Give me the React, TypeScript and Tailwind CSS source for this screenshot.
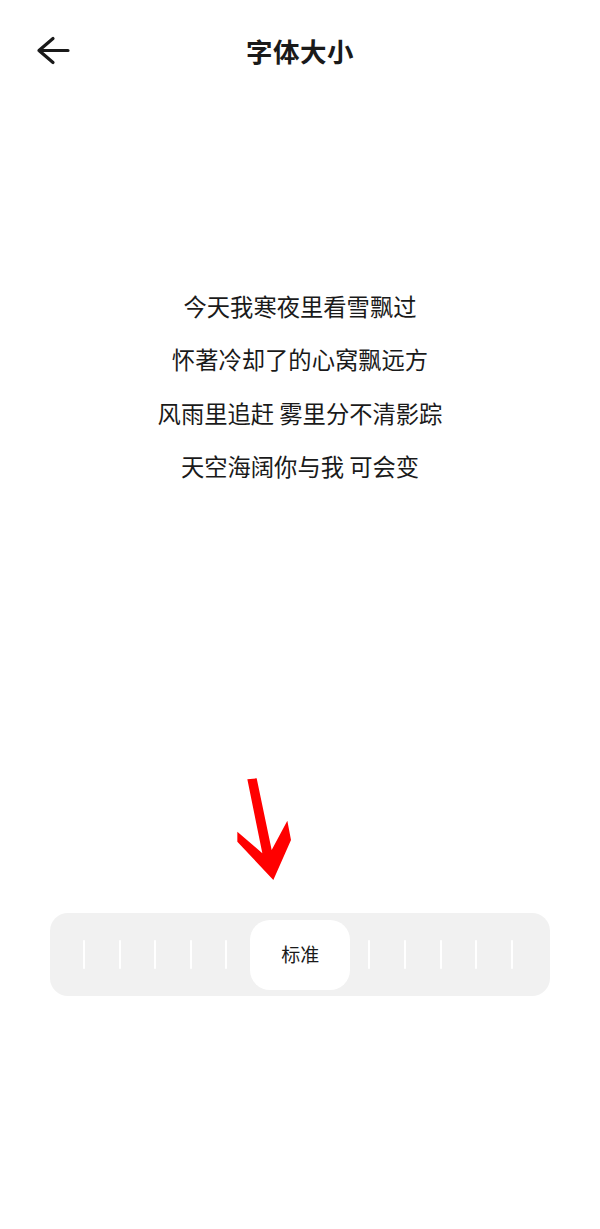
const lyrics = [
  '今天我寒夜里看雪飘过',
  '怀著冷却了的心窝飘远方',
  '风雨里追赶 雾里分不清影踪',
  '天空海阔你与我 可会变',
];

const Ticks = () => (
  <div className="flex items-center gap-[33.6px]">
    {[0, 1, 2, 3, 4].map((i) => (
      <span key={i} className="block h-[29px] w-[2px] rounded-full bg-white" />
    ))}
  </div>
);

export default function App() {
  return (
    <div
      className="relative flex h-[1229px] w-full flex-col bg-white text-[#1a1a1a]"
      style={{ fontFamily: '"Noto Sans CJK SC", "Noto Sans", sans-serif' }}
    >
      {/* Header */}
      <header className="relative flex h-[102px] items-center justify-center">
        <button className="absolute left-[36px] top-[36px] flex h-[30px] w-[34px] items-center justify-center">
          <svg width="34" height="30" viewBox="0 0 34 30" fill="none">
            <path
              d="M17 2.5 L3 14.5 L17 26.5 M3 14.5 H32"
              stroke="#1a1a1a"
              strokeWidth="3.2"
              strokeLinecap="round"
              strokeLinejoin="round"
            />
          </svg>
        </button>
        <h1 className="text-[26.5px] font-bold leading-none tracking-[0.5px]">字体大小</h1>
      </header>

      {/* Preview text */}
      <div className="mt-[178px] flex flex-col items-center">
        {lyrics.map((line) => (
          <p key={line} className="text-[23.3px] leading-[53.3px] whitespace-pre">
            {line}
          </p>
        ))}
      </div>

      {/* Size slider */}
      <div className="mx-[50px] mt-[420px] flex h-[83px] items-center rounded-[18px] bg-[#f1f1f1] pl-[33px]">
        <Ticks />
        <div className="ml-[23px] flex h-[70px] w-[100px] items-center justify-center rounded-[20px] bg-white">
          <span className="text-[19px]">标准</span>
        </div>
        <div className="ml-[18px]">
          <Ticks />
        </div>
      </div>

      {/* Annotation arrow */}
      <svg
        className="absolute left-[230px] top-[770px]"
        width="70"
        height="115"
        viewBox="0 0 210 345"
      >
        <polygon
          points="52,28 80,25 125,240 172,152 183,210 130,330 22,215 22,185 97,250"
          fill="#ff0000"
        />
      </svg>
    </div>
  );
}
